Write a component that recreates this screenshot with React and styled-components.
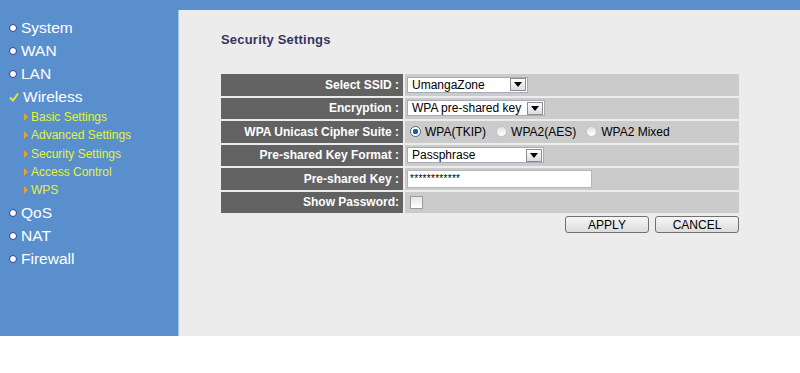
import React from 'react';
import styled, { createGlobalStyle } from 'styled-components';

const GlobalStyle = createGlobalStyle`
  html, body {
    margin: 0;
    padding: 0;
    background: #ffffff;
    font-family: "Liberation Sans", Arial, sans-serif;
  }
`;

const Page = styled.div`
  width: 800px;
  height: 373px;
  background: #ffffff;
`;

const TopBar = styled.div`
  height: 10px;
  background: #5a8ecd;
`;

const Body = styled.div`
  display: flex;
  height: 326px;
`;

const Sidebar = styled.nav`
  width: 179px;
  background: #5a8fcd;
  border-right: 1px solid #a9c4e6;
  padding-top: 6px;
  box-sizing: border-box;
`;

const MenuItem = styled.div`
  display: flex;
  align-items: center;
  height: 23px;
  padding-left: 9px;
  color: #ffffff;
  font-size: 15.5px;
  gap: 3px;
`;

const Bullet = styled.span`
  width: 6px;
  height: 6px;
  border-radius: 50%;
  background: #ffffff;
  border: 1px solid #2c3c8c;
  margin-right: 1px;
`;

const SubMenu = styled.div`
  padding: 0 0 2px 0;
`;

const SubItem = styled.div`
  display: flex;
  align-items: center;
  height: 18.3px;
  padding-left: 24px;
  color: #e4f23a;
  font-size: 12px;
  gap: 3px;
`;

const Arrow = styled.span`
  width: 0;
  height: 0;
  border-top: 4px solid transparent;
  border-bottom: 4px solid transparent;
  border-left: 4px solid #f0a020;
`;

const Main = styled.main`
  flex: 1;
  background: #ececec;
  padding: 22px 61px 0 42px;
`;

const Title = styled.h2`
  margin: 0 0 27px 0;
  font-size: 13px;
  font-weight: bold;
  color: #35355f;
  letter-spacing: 0.2px;
`;

const Table = styled.div`
  display: grid;
  grid-template-columns: 182px 1fr;
  column-gap: 2px;
  row-gap: 2px;
`;

const Label = styled.div`
  background: #626262;
  color: #ffffff;
  font-weight: bold;
  font-size: 12px;
  padding-right: 4px;
  height: 21.5px;
  display: flex;
  align-items: center;
  justify-content: flex-end;
`;

const Value = styled.div`
  background: #cbcbcb;
  height: 21.5px;
  display: flex;
  align-items: center;
  padding-left: 2px;
  font-size: 12px;
  color: #000;
`;

const SelectBox = styled.div`
  width: ${p => p.$w}px;
  height: 16px;
  box-sizing: border-box;
  background: #fff;
  border: 1px solid #a5acb5;
  display: flex;
  align-items: center;
  justify-content: space-between;
  padding-left: 4px;
  font-size: 12px;
`;

const SelectButton = styled.span`
  width: 16px;
  height: 13px;
  margin-right: 1px;
  box-sizing: border-box;
  border: 1px solid #8e8e8e;
  background: linear-gradient(#fdfdfd, #dcdcdc);
  display: flex;
  align-items: center;
  justify-content: center;
  &::after {
    content: '';
    border-left: 4px solid transparent;
    border-right: 4px solid transparent;
    border-top: 5px solid #000;
  }
`;

const TextInput = styled.div`
  width: 185px;
  height: 18px;
  box-sizing: border-box;
  background: #fff;
  border: 1px solid #b5b5b5;
  font-size: 10px;
  padding-left: 2px;
  display: flex;
  align-items: center;
  letter-spacing: 0.3px;
`;

const RadioGroup = styled.div`
  display: flex;
  align-items: center;
  gap: 10px;
  padding-left: 3px;
`;

const Radio = styled.label`
  display: flex;
  align-items: center;
  gap: 4px;
  font-size: 12px;
  &::before {
    content: '';
    width: 9px;
    height: 9px;
    border-radius: 50%;
    border: 1px solid ${p => (p.$on ? '#4a6a8a' : '#c4c4c4')};
    background: ${p =>
      p.$on
        ? 'radial-gradient(circle, #1f5fa0 0 2.5px, #ffffff 3px)'
        : 'linear-gradient(#e4e4e4, #ffffff)'};
  }
`;

const Checkbox = styled.span`
  width: 11px;
  height: 11px;
  margin-left: 3px;
  border: 1px solid #9a9a9a;
  background: linear-gradient(#e6e6e6, #ffffff);
`;

const Actions = styled.div`
  display: flex;
  justify-content: flex-end;
  gap: 6px;
  margin-top: 3px;
`;

const Button = styled.button`
  width: 84px;
  height: 17px;
  padding: 0;
  font-family: "Liberation Sans", Arial, sans-serif;
  font-size: 12px;
  color: #000;
  border: 1px solid #707070;
  border-radius: 3px;
  background: linear-gradient(#f6f6f6, #dcdcdc);
`;

const Select = ({ w, children }) => (
  <SelectBox $w={w}>
    <span>{children}</span>
    <SelectButton />
  </SelectBox>
);

const topMenu = ['System', 'WAN', 'LAN'];
const subMenu = ['Basic Settings', 'Advanced Settings', 'Security Settings', 'Access Control', 'WPS'];
const bottomMenu = ['QoS', 'NAT', 'Firewall'];

const Check = () => (
  <svg width="10" height="10" viewBox="0 0 10 10" style={{ marginRight: 1 }}>
    <path d="M1 5.5 L4 8.5 L9 1.5" stroke="#dfe93a" strokeWidth="2" fill="none" />
  </svg>
);

export default function App() {
  return (
    <Page>
      <GlobalStyle />
      <TopBar />
      <Body>
        <Sidebar>
          {topMenu.map(m => (
            <MenuItem key={m}><Bullet />{m}</MenuItem>
          ))}
          <MenuItem><Check />Wireless</MenuItem>
          <SubMenu>
            {subMenu.map(s => (
              <SubItem key={s}><Arrow />{s}</SubItem>
            ))}
          </SubMenu>
          {bottomMenu.map(m => (
            <MenuItem key={m}><Bullet />{m}</MenuItem>
          ))}
        </Sidebar>
        <Main>
          <Title>Security Settings</Title>
          <Table>
            <Label>Select SSID :</Label>
            <Value><Select w={121}>UmangaZone</Select></Value>
            <Label>Encryption :</Label>
            <Value><Select w={138}>WPA pre-shared key</Select></Value>
            <Label>WPA Unicast Cipher Suite :</Label>
            <Value>
              <RadioGroup>
                <Radio $on>WPA(TKIP)</Radio>
                <Radio>WPA2(AES)</Radio>
                <Radio>WPA2 Mixed</Radio>
              </RadioGroup>
            </Value>
            <Label>Pre-shared Key Format :</Label>
            <Value><Select w={137}>Passphrase</Select></Value>
            <Label>Pre-shared Key :</Label>
            <Value><TextInput>************</TextInput></Value>
            <Label>Show Password:</Label>
            <Value><Checkbox /></Value>
          </Table>
          <Actions>
            <Button>APPLY</Button>
            <Button>CANCEL</Button>
          </Actions>
        </Main>
      </Body>
    </Page>
  );
}
